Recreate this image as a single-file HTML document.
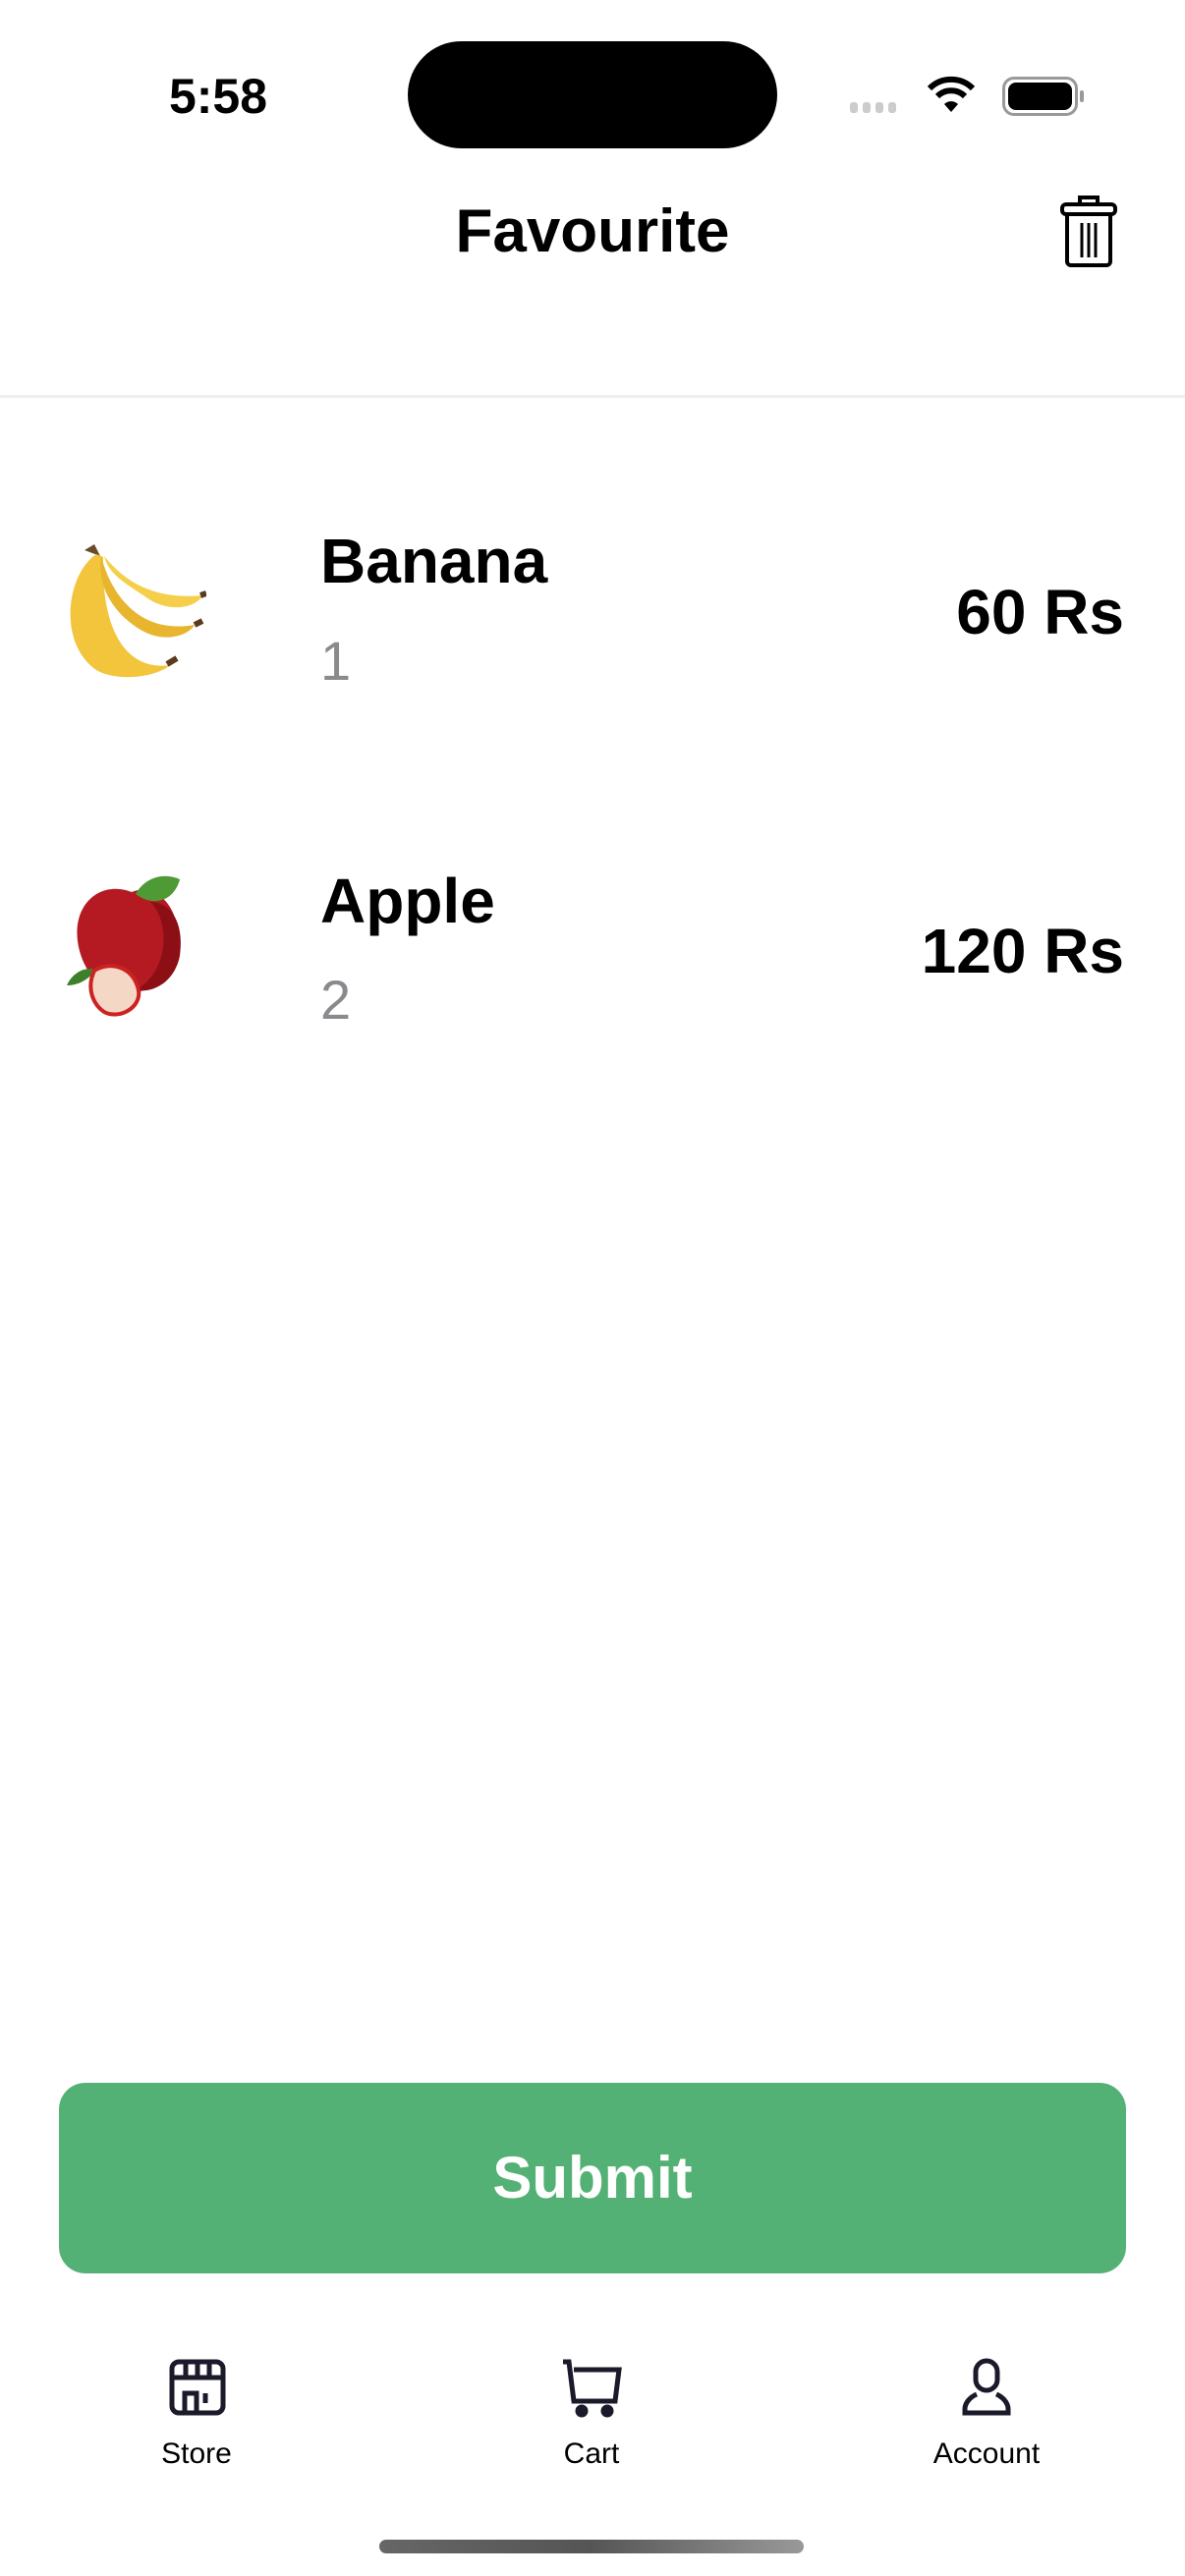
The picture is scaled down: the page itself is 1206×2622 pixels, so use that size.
<!DOCTYPE html>
<html><head><meta charset="utf-8"><style>
*{margin:0;padding:0;box-sizing:border-box}
body{width:1206px;height:2622px;background:#fff;position:relative;overflow:hidden;font-family:"Liberation Sans",sans-serif;color:#000}
.a{position:absolute}
.t{font-weight:bold}
</style></head><body>
<div class="a t" style="left:160px;top:70px;width:124px;text-align:center;font-size:50px;line-height:56px">5:58</div>
<div class="a" style="left:415px;top:42px;width:376px;height:109px;background:#000;border-radius:55px"></div>
<div class="a" style="left:865px;top:104px;display:flex;gap:5px"><i style="display:block;width:8px;height:11px;background:#ccc;border-radius:3px"></i><i style="display:block;width:8px;height:11px;background:#ccc;border-radius:3px"></i><i style="display:block;width:8px;height:11px;background:#ccc;border-radius:3px"></i><i style="display:block;width:8px;height:11px;background:#ccc;border-radius:3px"></i></div>
<svg class="a" style="left:943px;top:76px" width="50" height="40" viewBox="0 0 50 40"><path d="M3 14a31 31 0 0 1 44 0" stroke="#000" stroke-width="6" fill="none"/><path d="M11 22a20 20 0 0 1 28 0" stroke="#000" stroke-width="6" fill="none"/><path d="M18 30l7 8 7-8a10 10 0 0 0-14 0z" fill="#000"/></svg>
<div class="a" style="left:1020px;top:78px;width:77px;height:40px;border:3px solid #999;border-radius:12px"><div style="position:absolute;left:3px;top:3px;right:3px;bottom:3px;background:#000;border-radius:8px"></div></div>
<div class="a" style="left:1099px;top:92px;width:4px;height:12px;background:#999;border-radius:2px"></div>
<div class="a t" style="left:0;width:1206px;top:200px;text-align:center;font-size:62px;line-height:72px">Favourite</div>
<svg class="a" style="left:1077px;top:197px" width="62" height="76" viewBox="0 0 62 76"><path d="M22 10V4h18v6" fill="none" stroke="#000" stroke-width="4"/><rect x="4" y="11" width="54" height="10" rx="4" fill="none" stroke="#000" stroke-width="4"/><path d="M9 21v48a4 4 0 0 0 4 4h36a4 4 0 0 0 4-4V21" fill="none" stroke="#000" stroke-width="4"/><path d="M24 30v35M31 30v35M38 30v35" stroke="#000" stroke-width="3"/></svg>
<div class="a" style="left:0;top:402px;width:1206px;height:3px;background:#efefef"></div>

<svg class="a" style="left:58px;top:544px" width="152" height="152" viewBox="0 0 152 152">
<path d="M28 16l10-6 6 12" fill="#6b4a2a"/>
<path d="M40 20C10 40 0 110 40 138c20 12 60 8 75-5-35 5-70-20-68-110z" fill="#f2c53d"/>
<path d="M45 22c10 40 40 80 95 70-5 10-30 20-55 5C60 82 40 55 45 22z" fill="#e8b52f"/>
<path d="M48 22c20 25 50 45 100 40-5 12-35 20-60 0C70 50 52 40 48 22z" fill="#f5cf4a"/>
<path d="M112 132l10-6M140 92l8-4M146 62l6-2" stroke="#5a3b1e" stroke-width="6"/>
</svg>
<div class="a t" style="left:326px;top:534px;font-size:64px;line-height:74px">Banana</div>
<div class="a" style="left:326px;top:640px;font-size:56px;line-height:66px;color:#8a8a8e">1</div>
<div class="a t" style="right:62px;top:586px;font-size:64px;line-height:74px">60 Rs</div>

<svg class="a" style="left:58px;top:888px" width="152" height="152" viewBox="0 0 152 152">
<path d="M76 20c-30-12-60 10-55 50 4 30 25 55 50 52 25 3 50-20 52-52 2-38-25-60-47-50z" fill="#b51a22"/>
<path d="M95 30c20 0 35 20 30 55-5 25-25 38-45 35 35-20 35-70 15-90z" fill="#8c0f16"/>
<path d="M80 22c10-18 30-22 45-15-5 20-25 30-45 15z" fill="#4e9a34"/>
<path d="M10 115c5-12 18-20 30-16-8 10-18 16-30 16z" fill="#3d7f2a"/>
<path d="M38 100c15-10 40-5 45 20 3 18-20 30-35 22-12-8-18-25-10-42z" fill="#f4d7c4" stroke="#c22" stroke-width="4"/>
</svg>
<div class="a t" style="left:326px;top:880px;font-size:64px;line-height:74px">Apple</div>
<div class="a" style="left:326px;top:985px;font-size:56px;line-height:66px;color:#8a8a8e">2</div>
<div class="a t" style="right:62px;top:931px;font-size:64px;line-height:74px">120 Rs</div>

<div class="a" style="left:60px;top:2120px;width:1086px;height:194px;background:#54b175;border-radius:27px;color:#fff;text-align:center;font-size:60px;line-height:194px;font-weight:bold">Submit</div>

<svg class="a" style="left:171px;top:2400px" width="60" height="60" viewBox="0 0 60 60" fill="none" stroke="#1a1a2a" stroke-width="5"><rect x="4" y="4" width="52" height="52" rx="7"/><path d="M4 20h52M18 4v16M30 4v16M42 4v16M17 56V36h12v20M38 36v10"/></svg>
<svg class="a" style="left:570px;top:2400px" width="64" height="62" viewBox="0 0 64 62" fill="none" stroke="#1a1a2a" stroke-width="5"><path d="M3 4h6l5 40h42l4-32H14"/><circle cx="22" cy="54" r="4" fill="#1a1a2a"/><circle cx="48" cy="54" r="4" fill="#1a1a2a"/></svg>
<svg class="a" style="left:978px;top:2400px" width="52" height="62" viewBox="0 0 52 62" fill="none" stroke="#1a1a2a" stroke-width="5"><rect x="15" y="3" width="22" height="30" rx="11"/><path d="M16 37C9 40 4 46 4 52v4h44v-4c0-6-5-12-12-15"/></svg>
<div class="a" style="left:100px;width:200px;top:2480px;text-align:center;font-size:30px;line-height:36px">Store</div>
<div class="a" style="left:502px;width:200px;top:2480px;text-align:center;font-size:30px;line-height:36px">Cart</div>
<div class="a" style="left:904px;width:200px;top:2480px;text-align:center;font-size:30px;line-height:36px">Account</div>
<div class="a" style="left:386px;top:2585px;width:432px;height:14px;border-radius:7px;background:linear-gradient(90deg,#666,#555 50%,#999)"></div>
</body></html>
